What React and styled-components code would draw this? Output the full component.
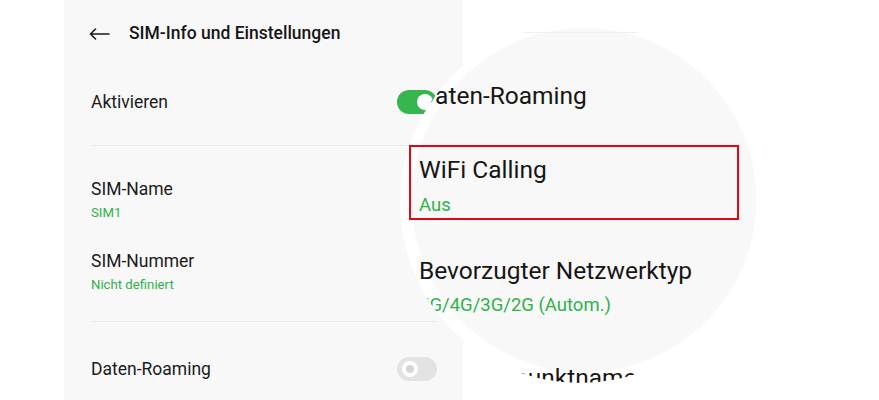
import styled, { createGlobalStyle } from 'styled-components';

const GlobalStyle = createGlobalStyle`
  html, body {
    margin: 0;
    padding: 0;
    background: #ffffff;
  }
  body {
    font-family: Roboto, "Noto Sans", "Liberation Sans", sans-serif;
    color: #1b1b1b;
  }
`;

const Stage = styled.div`
  position: relative;
  width: 879px;
  height: 400px;
  overflow: hidden;
  background: #ffffff;
`;

const Phone = styled.div`
  display: flex;
  flex-flow: column nowrap;
  width: 399px;
  height: 400px;
  margin-left: 64px;
  padding: 0 26px 0 27px;
  box-sizing: border-box;
  background: #f8f8f8;
  overflow: hidden;
`;

const Header = styled.div`
  display: flex;
  align-items: center;
  gap: 19px;
  height: 66px;
  flex-shrink: 0;

  svg {
    width: 21px;
    height: 12px;
    margin: 2px 0 0 -2px;
  }
`;

const HeaderTitle = styled.h1`
  margin: 0;
  font-size: 17.5px;
  font-weight: 500;
  color: #161616;
`;

const Row = styled.div`
  display: flex;
  align-items: center;
  justify-content: space-between;
  flex-shrink: 0;
  height: ${({ h }) => h}px;
`;

const Stack = styled.div`
  display: flex;
  flex-flow: column nowrap;
  flex-shrink: 0;
  padding-top: ${({ top }) => top}px;
  padding-bottom: ${({ bottom }) => bottom || 0}px;
`;

const Label = styled.span`
  font-size: 17.5px;
  line-height: 20px;
  color: #1b1b1b;
`;

const Sub = styled.span`
  margin-top: 6px;
  font-size: 13.2px;
  line-height: 16px;
  color: #2fb24a;
`;

const Divider = styled.div`
  flex-shrink: 0;
  height: 1px;
  margin-top: ${({ top }) => top || 0}px;
  background: ${({ faint }) => (faint ? '#efefef' : '#e9e9e9')};
`;

const Toggle = styled.div`
  position: relative;
  width: 40px;
  height: 24px;
  border-radius: 12px;
  background: ${({ on }) => (on ? '#37b54f' : '#e3e3e3')};
  flex-shrink: 0;

  &::after {
    content: '';
    position: absolute;
    top: 4px;
    left: ${({ on }) => (on ? '20px' : '5px')};
    width: ${({ on }) => (on ? '16px' : '8px')};
    height: ${({ on }) => (on ? '16px' : '8px')};
    border-radius: 50%;
    background: ${({ on }) => (on ? '#ffffff' : '#d6d6d6')};
    border: ${({ on }) => (on ? 'none' : '4px solid #ffffff')};
  }
`;

const Lens = styled.div`
  position: absolute;
  left: 400px;
  top: 23px;
  width: 360px;
  height: 360px;
  border-radius: 50%;
  overflow: hidden;
  background: radial-gradient(circle 173px at 184px 177px, #f8f8f8 99%, #ffffff 100%);
`;

const LensContent = styled.div`
  display: flex;
  flex-flow: column nowrap;
  padding: 9px 0 0 19px;
`;

const BigLabel = styled.span`
  margin-top: ${({ top }) => top}px;
  font-size: 24.5px;
  line-height: 28px;
  color: #161616;
  white-space: nowrap;
`;

const BigSub = styled.span`
  margin-top: ${({ top }) => top}px;
  font-size: 18.5px;
  line-height: 22px;
  color: #2fb24a;
  white-space: nowrap;
`;

const Highlight = styled.div`
  position: absolute;
  left: 409px;
  top: 145px;
  width: 330px;
  height: 75px;
  box-sizing: border-box;
  border: 2px solid #e30613;
`;

const BackArrow = () => (
  <svg viewBox="0 0 21 12" fill="none" stroke="#1b1b1b" strokeWidth="1.6" strokeLinecap="round" strokeLinejoin="round">
    <path d="M20 6H1.5M6.5 1L1.5 6l5 5" />
  </svg>
);

const App = () => {
  return (
    <>
      <GlobalStyle />
      <Stage>
        <Phone>
          <Header>
            <BackArrow />
            <HeaderTitle>SIM-Info und Einstellungen</HeaderTitle>
          </Header>
          <Row h={72}>
            <Label>Aktivieren</Label>
            <Toggle on />
          </Row>
          <Divider top={7} />
          <Stack top={33}>
            <Label>SIM-Name</Label>
            <Sub>SIM1</Sub>
          </Stack>
          <Stack top={30} bottom={28}>
            <Label>SIM-Nummer</Label>
            <Sub>Nicht definiert</Sub>
          </Stack>
          <Divider />
          <Row h={94}>
            <Label>Daten-Roaming</Label>
            <Toggle />
          </Row>
        </Phone>

        <Lens>
          <LensContent>
            <Divider faint />
            <BigLabel top={49}>Daten-Roaming</BigLabel>
            <BigLabel top={46}>WiFi Calling</BigLabel>
            <BigSub top={10}>Aus</BigSub>
            <BigLabel top={41}>Bevorzugter Netzwerktyp</BigLabel>
            <BigSub top={9}>5G/4G/3G/2G (Autom.)</BigSub>
            <BigLabel top={48}>Zugangspunktnamen</BigLabel>
          </LensContent>
        </Lens>
        <Highlight />
      </Stage>
    </>
  );
};

export default App;
